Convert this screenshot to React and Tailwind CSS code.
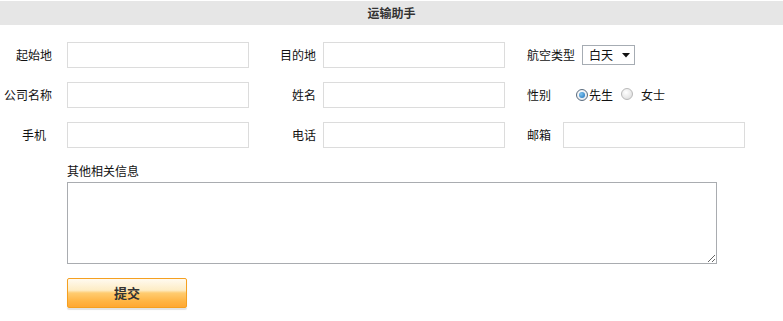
import React from "react";

function Radio({ checked }) {
  return (
    <span
      className={
        "inline-flex h-[12px] w-[12px] items-center justify-center rounded-full border " +
        (checked
          ? "border-[#5a6b7d] bg-[radial-gradient(circle_at_40%_35%,#ffffff,#dde3ea)]"
          : "border-[#b9b9b9] bg-[radial-gradient(circle_at_40%_35%,#ffffff,#d8d8d8)]")
      }
    >
      {checked && (
        <span className="h-[6px] w-[6px] rounded-full bg-[radial-gradient(circle_at_35%_35%,#7fc4f0,#1d6fb8)]" />
      )}
    </span>
  );
}

function Input({ className = "" }) {
  return (
    <div className={"h-[26px] w-[182px] border border-[#dcdcdc] bg-white " + className} />
  );
}

export default function App() {
  return (
    <div
      className="h-[321px] w-[783px] bg-white text-[12px] leading-[16px] text-[#111]"
      style={{ fontFamily: '"Noto Sans CJK SC", "Noto Sans", sans-serif' }}
    >
      <div className="mt-px flex h-[24px] items-center justify-center bg-[#e6e6e6] text-[12px] font-bold text-[#333]">
        运输助手
      </div>

      <div className="mt-[17px] flex flex-col gap-[14px]">
        {/* row 1 */}
        <div className="flex h-[26px] items-center">
          <div className="w-[52px] text-right">起始地</div>
          <Input className="ml-[15px]" />
          <div className="w-[67px] text-right">目的地</div>
          <Input className="ml-[7px]" />
          <div className="ml-[22px]">航空类型</div>
          <div className="ml-[7px] flex h-[20px] w-[53px] items-center border border-[#a6acb3] pl-[6px]">
            <span>白天</span>
            <svg className="ml-[9px]" width="8" height="5" viewBox="0 0 8 5">
              <path d="M0 0 H8 L4 4.5 Z" fill="#111" />
            </svg>
          </div>
        </div>
        {/* row 2 */}
        <div className="flex h-[26px] items-center">
          <div className="w-[52px] text-right">公司名称</div>
          <Input className="ml-[15px]" />
          <div className="w-[67px] text-right">姓名</div>
          <Input className="ml-[7px]" />
          <div className="ml-[22px]">性别</div>
          <div className="ml-[25px] flex items-center">
            <Radio checked />
            <span className="ml-[1px]">先生</span>
            <span className="ml-[8px]"><Radio /></span>
            <span className="ml-[8px]">女士</span>
          </div>
        </div>
        {/* row 3 */}
        <div className="flex h-[26px] items-center">
          <div className="w-[52px] pr-[6px] text-right">手机</div>
          <Input className="ml-[15px]" />
          <div className="w-[67px] text-right">电话</div>
          <Input className="ml-[7px]" />
          <div className="ml-[22px]">邮箱</div>
          <Input className="ml-[12px]" />
        </div>
      </div>

      <div className="ml-[67px] mt-[15px]">
        <div>其他相关信息</div>
        <textarea className="mt-[3px] block h-[82px] w-[650px] resize border border-[#a9acb0] bg-white outline-none" />
        <button className="mt-[14px] flex h-[30px] w-[120px] items-center justify-center rounded-[2px] border border-[#f5a020] bg-[linear-gradient(to_bottom,#fffaf0_0%,#fdecc4_40%,#ffcc70_50%,#ffb443_80%,#ffa833_100%)] text-[13px] font-bold text-[#333] shadow-[0_2px_1px_#e3e3e3]">
          提交
        </button>
      </div>
    </div>
  );
}
